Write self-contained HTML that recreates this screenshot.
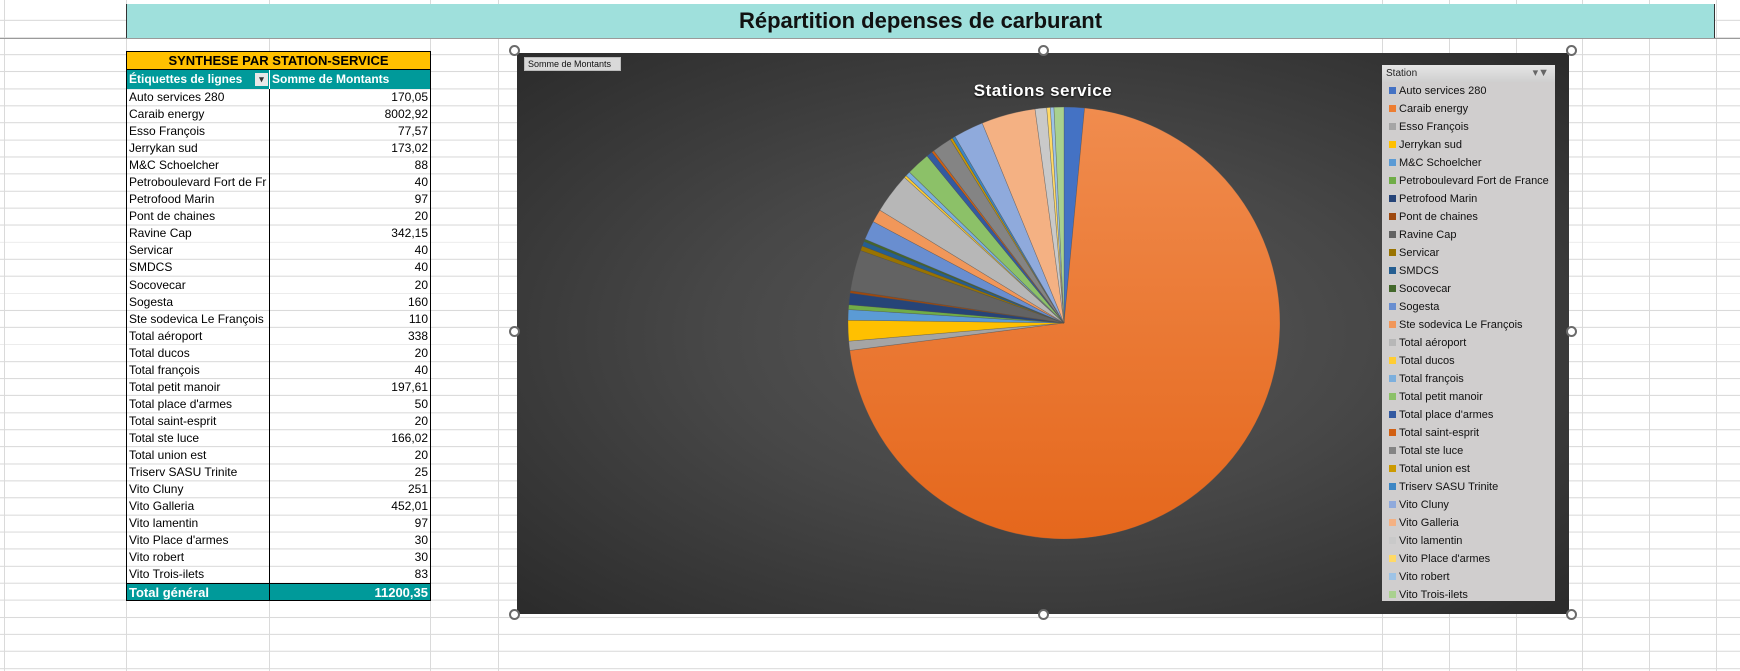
<!DOCTYPE html>
<html><head><meta charset="utf-8"><style>
*{margin:0;padding:0;box-sizing:border-box}
body{width:1740px;height:671px;overflow:hidden;background:#fff;position:relative;font-family:"Liberation Sans",sans-serif}
.grid{position:absolute;left:0;top:0;width:1740px;height:671px;
background-image:repeating-linear-gradient(to bottom,transparent 0,transparent 16.05px,#dadada 16.05px,#dadada 17.05px);
background-position:0 4px}
.v{position:absolute;top:0;width:1px;height:671px;background:#dadada}
#title{position:absolute;left:126px;top:4px;width:1589px;height:34px;background:#9fe0dc;border-left:1px solid #333;border-right:1px solid #333;
text-align:center;font-weight:bold;font-size:22px;line-height:34px;color:#111}
#hline{position:absolute;left:0;top:38px;width:1740px;height:1px;background:#9a9a9a}
#tbl{position:absolute;left:126px;top:51px;width:305px;font-size:12px}
.r{height:17.05px;line-height:17px;display:flex;border-left:1px solid #000;border-right:1px solid #000}
.r div{padding:0 2px;white-space:nowrap;overflow:hidden}
.c1{width:143px;border-right:1px solid #000}
.c2{flex:1;text-align:right}
.or{background:#ffc000;border:1px solid #000;height:19px;line-height:18px;text-align:center;font-weight:bold;font-size:13px}
.hd{background:#009a9a;color:#fff;font-weight:bold;height:19px;line-height:19px}
.hd .c1{border-right:1px solid #fff;position:relative}
.tot{background:#009a9a;color:#fff;font-weight:bold;border:1px solid #000;height:18px;font-size:13px}
.tot .c1{border-right:1px solid #000}
#chart{position:absolute;left:517px;top:53px;width:1052px;height:561px;
background:radial-gradient(ellipse at 50% 50%,#585858 0%,#474747 45%,#2b2b2b 100%)}
.h{position:absolute;width:11px;height:11px;border-radius:50%;border:2px solid #6a6a6a;background:#fff}
#btn{position:absolute;left:7px;top:4px;width:97px;height:14px;background:#d9d9d9;border:1px solid #bbb;font-size:9px;line-height:12px;padding-left:3px;color:#111}
#ctitle{position:absolute;left:0;width:1052px;top:28px;text-align:center;color:#fff;font-weight:bold;font-size:17px;letter-spacing:.5px;text-shadow:0 1px 2px #000}
#leg{position:absolute;left:865px;top:12px;width:173px;height:536px;background:#d0cece}
#leg .lh{height:17px;background:linear-gradient(#e6e6e6,#cfcfcf);font-size:10px;line-height:17px;padding-left:4px;color:#222;position:relative}
#leg .it{height:18px;font-size:11px;line-height:18px;padding-left:7px;color:#111;white-space:nowrap}
#leg .it span{display:inline-block;width:7px;height:7px;margin-right:3px;vertical-align:0}
</style></head><body>
<div class="grid"></div>
<div class="v" style="left:4px"></div>
<div class="v" style="left:126px"></div>
<div class="v" style="left:269px"></div>
<div class="v" style="left:430px"></div>
<div class="v" style="left:498px"></div>
<div class="v" style="left:1382px"></div><div class="v" style="left:1449px"></div><div class="v" style="left:1516px"></div><div class="v" style="left:1582px"></div><div class="v" style="left:1649px"></div><div class="v" style="left:1716px"></div>
<div id="title">Répartition depenses de carburant</div>
<div id="hline"></div>
<div id="tbl">
<div class="or">SYNTHESE PAR STATION-SERVICE</div>
<div class="r hd"><div class="c1">Étiquettes de lignes<span style="position:absolute;right:1px;top:3px;width:13px;height:13px;background:#e8e8e8;color:#333;font-size:9px;line-height:13px;text-align:center">▾</span></div><div class="c2" style="text-align:left">Somme de Montants</div></div>
<div id="rows"></div>
<div class="r tot"><div class="c1">Total général</div><div class="c2">11200,35</div></div>
</div>
<div id="chart">
<div id="btn">Somme de Montants</div>
<div id="ctitle">Stations service</div>
<svg id="pie" width="1052" height="561" style="position:absolute;left:0;top:0"></svg>
<div id="leg"><div class="lh">Station<span style="position:absolute;right:6px;top:0;color:#666;font-size:11px">▾▼</span></div></div>
</div>
<div class="h" style="left:509px;top:45px"></div><div class="h" style="left:1038px;top:45px"></div><div class="h" style="left:1566px;top:45px"></div>
<div class="h" style="left:509px;top:326px"></div><div class="h" style="left:1566px;top:326px"></div>
<div class="h" style="left:509px;top:609px"></div><div class="h" style="left:1038px;top:609px"></div><div class="h" style="left:1566px;top:609px"></div>
<script>
var d=[["Auto services 280","170,05",170.05,"#4472c4"],["Caraib energy","8002,92",8002.92,"#ed7d31"],["Esso François","77,57",77.57,"#a5a5a5"],["Jerrykan sud","173,02",173.02,"#ffc000"],["M&C Schoelcher","88",88,"#5b9bd5"],["Petroboulevard Fort de France","40",40,"#70ad47"],["Petrofood Marin","97",97,"#264478"],["Pont de chaines","20",20,"#9e480e"],["Ravine Cap","342,15",342.15,"#636363"],["Servicar","40",40,"#997300"],["SMDCS","40",40,"#255e91"],["Socovecar","20",20,"#43682b"],["Sogesta","160",160,"#698ed0"],["Ste sodevica Le François","110",110,"#f1975a"],["Total aéroport","338",338,"#b7b7b7"],["Total ducos","20",20,"#ffcd33"],["Total françois","40",40,"#7cafdd"],["Total petit manoir","197,61",197.61,"#8cc168"],["Total place d'armes","50",50,"#335aa1"],["Total saint-esprit","20",20,"#d26012"],["Total ste luce","166,02",166.02,"#848484"],["Total union est","20",20,"#cc9a00"],["Triserv SASU Trinite","25",25,"#3c86c4"],["Vito Cluny","251",251,"#8faadc"],["Vito Galleria","452,01",452.01,"#f4b183"],["Vito lamentin","97",97,"#c9c9c9"],["Vito Place d'armes","30",30,"#ffd966"],["Vito robert","30",30,"#9dc3e6"],["Vito Trois-ilets","83",83,"#a9d18e"]];
var rows="",leg="";
d.forEach(function(x){var n=x[0].length>26?"Petroboulevard Fort de Fr":x[0];
rows+='<div class="r"><div class="c1">'+n.replace("&","&amp;")+'</div><div class="c2">'+x[1]+'</div></div>';
leg+='<div class="it"><span style="background:'+x[3]+'"></span>'+x[0].replace("&","&amp;")+'</div>';});
document.getElementById("rows").innerHTML=rows;
document.getElementById("leg").innerHTML+=leg;
var cx=547,cy=270,r=216,tot=11200.35,a=0,s='<defs><linearGradient id="og" x1="0" y1="0" x2="0" y2="1"><stop offset="0" stop-color="#f08c4e"/><stop offset="1" stop-color="#e5671c"/></linearGradient></defs>';
d.forEach(function(x,i){var b=a+x[2]/tot*2*Math.PI;
var x1=cx+r*Math.sin(a),y1=cy-r*Math.cos(a),x2=cx+r*Math.sin(b),y2=cy-r*Math.cos(b);
s+='<path d="M'+cx+' '+cy+'L'+x1.toFixed(2)+' '+y1.toFixed(2)+'A'+r+' '+r+' 0 '+((b-a)>Math.PI?1:0)+' 1 '+x2.toFixed(2)+' '+y2.toFixed(2)+'Z" fill="'+(i==1?'url(#og)':x[3])+'" stroke="rgba(80,80,80,0.5)" stroke-width="0.6"/>';a=b;});
document.getElementById("pie").innerHTML=s;
</script>
</body></html>
